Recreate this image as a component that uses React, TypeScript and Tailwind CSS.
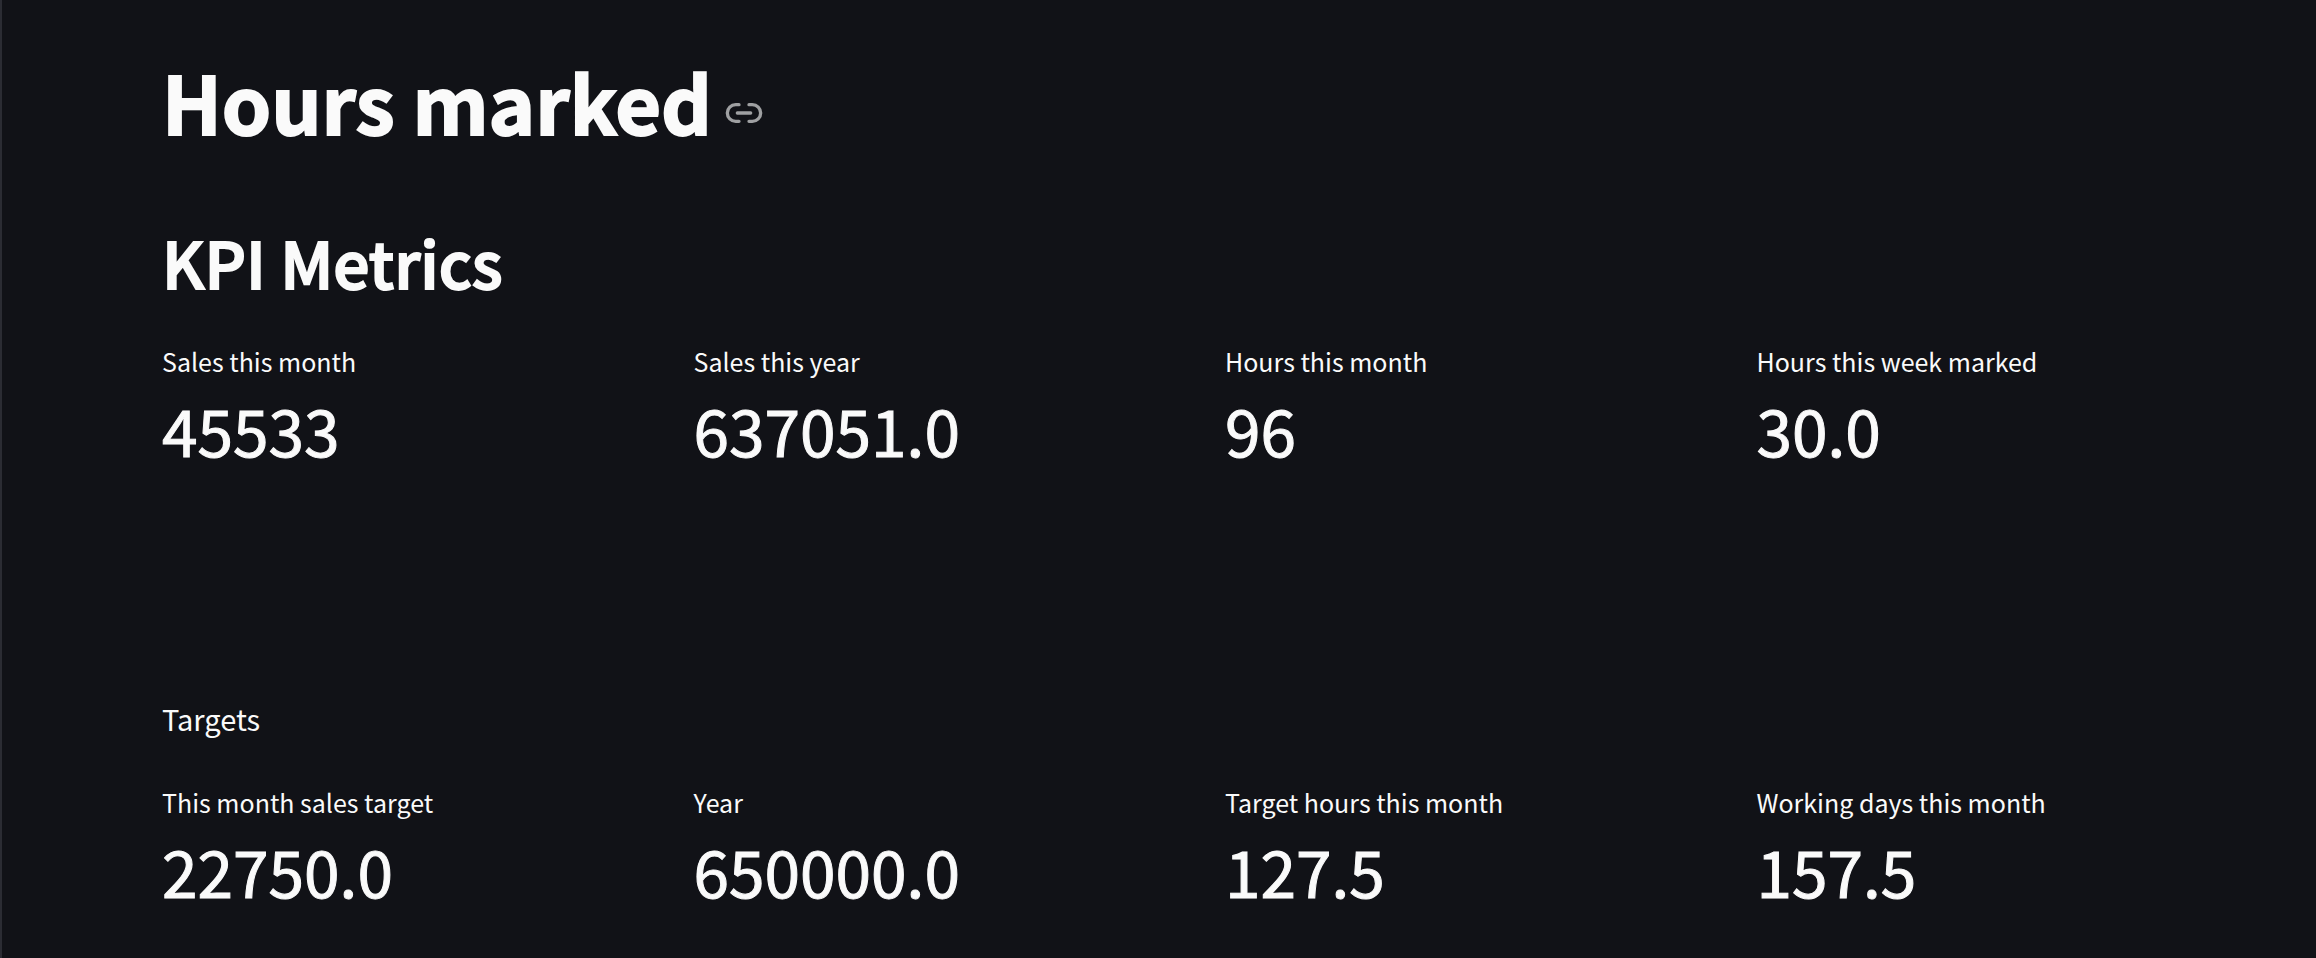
import { Link2 } from "lucide-react"

const sales = [
  { label: "Sales this month", value: "45533" },
  { label: "Sales this year", value: "637051.0" },
  { label: "Hours this month", value: "96" },
  { label: "Hours this week marked", value: "30.0" },
]

const targets = [
  { label: "This month sales target", value: "22750.0" },
  { label: "Year", value: "650000.0" },
  { label: "Target hours this month", value: "127.5" },
  { label: "Working days this month", value: "157.5" },
]

type MetricProps = { label: string; value: string }

const Metric = ({ label, value }: MetricProps) => (
  <div className="flex flex-col gap-2">
    <dt className="text-[25px] leading-10">{label}</dt>
    <dd className="text-[64px] leading-20 [-webkit-text-stroke:1px]">{value}</dd>
  </div>
)

const MetricRow = ({ items }: { items: MetricProps[] }) => (
  <dl className="mt-10 grid grid-cols-4 gap-8">
    {items.map((item) => (
      <Metric key={item.label} {...item} />
    ))}
  </dl>
)

export default function App() {
  return (
    <main className="min-h-screen border-l-2 border-[#2b2c33] bg-[#111217] pt-[53px] pr-[60px] pb-10 pl-40 font-['Noto_Sans_CJK_SC','Noto_Sans',sans-serif] text-[#fafafa]">
      <div id="hours-marked" className="flex items-center gap-3">
        <h1 className="text-[79px] leading-24 font-bold [-webkit-text-stroke:2px]">Hours marked</h1>
        <a href="#hours-marked" aria-label="Link to heading" className="mt-6 text-[#9fa0a2]">
          <Link2 className="size-10" />
        </a>
      </div>

      <h2 className="mt-18 text-[64px] leading-20 font-medium [-webkit-text-stroke:2px]">KPI Metrics</h2>
      <MetricRow items={sales} />

      <p className="mt-[225px] text-[29px] leading-12">Targets</p>
      <MetricRow items={targets} />
    </main>
  )
}
